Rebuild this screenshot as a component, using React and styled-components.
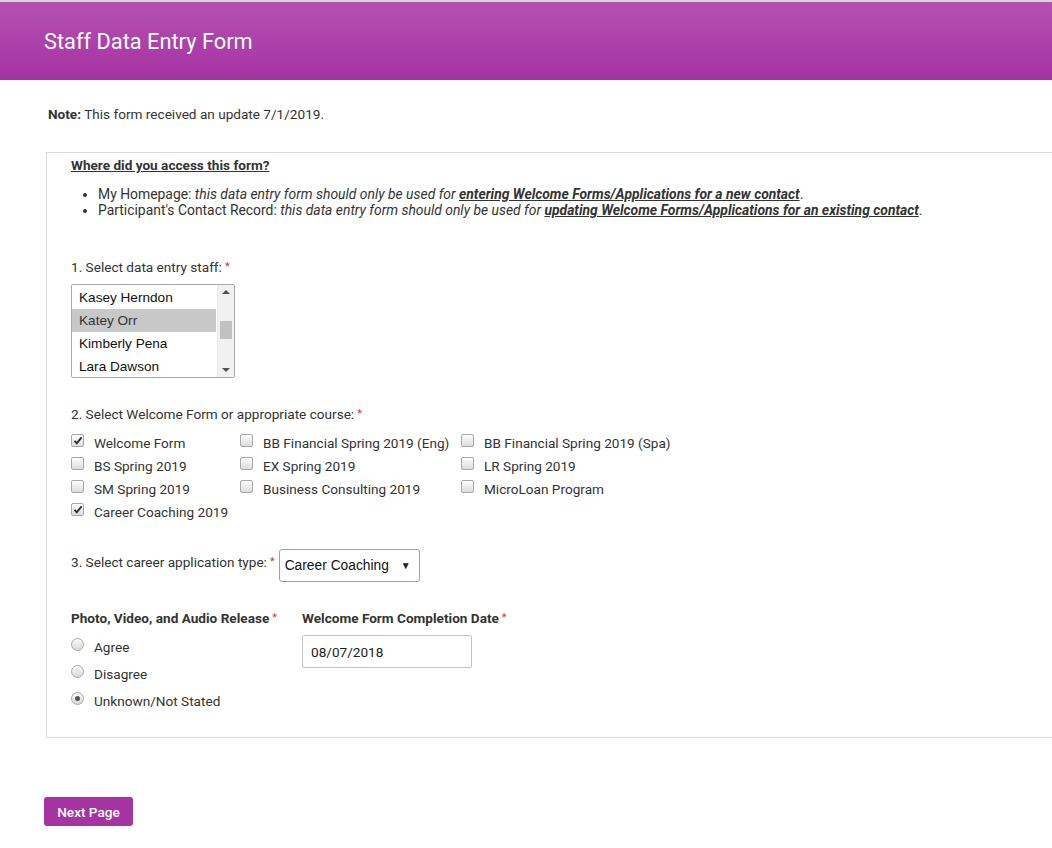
import React from "react";
import styled, { createGlobalStyle } from "styled-components";

const Global = createGlobalStyle`
  html, body { margin: 0; padding: 0; background: #fff; }
  body { font-family: Roboto, "Liberation Sans", Arial, sans-serif; color: #333; font-size: 13.6px; overflow: hidden; }
`;

const Page = styled.div`
  width: 1052px;
  min-height: 848px;
  border-top: 2px solid #d6d6d6;
`;

const Header = styled.header`
  height: 78px;
  background: linear-gradient(to bottom, #b551b2, #a532a2);
  display: flex;
  align-items: center;
  padding-left: 44px;
`;

const Title = styled.h1`
  margin: 0;
  font-size: 21.8px;
  font-weight: 400;
  color: #fff;
`;

const Note = styled.p`
  margin: 26px 0 0 48px;
  line-height: 16px;
  b { font-weight: 700; }
`;

const Panel = styled.section`
  margin: 30px 0 0 46px;
  border: 1px solid #dcdcdc;
  border-right: none;
  padding: 4px 0 23px 24px;
`;

const Heading = styled.div`
  font-weight: 700;
  text-decoration: underline;
  line-height: 17px;
`;

const Bullets = styled.ul`
  margin: 12px 0 0 0;
  padding-left: 27px;
  line-height: 16px;
  font-size: 13.9px;
  em { font-style: italic; }
  strong { font-weight: 700; font-style: italic; text-decoration: underline; }
`;

const Label = styled.div`
  line-height: 16px;
  margin-top: ${(p) => p.$mt || 0}px;
  display: flex;
  align-items: center;
  font-weight: ${(p) => (p.$bold ? 700 : 400)};
`;

const Req = styled.span`
  color: #e0302a;
  margin-left: 3px;
  font-size: 11px;
  font-weight: 400;
`;

const ListBox = styled.div`
  margin-top: 9px;
  width: 162px;
  height: 92px;
  border: 1px solid #a9a9a9;
  border-radius: 2px;
  display: flex;
  overflow: hidden;
`;

const Options = styled.div`
  flex: 1;
  padding-top: 1px;
  font-family: "Liberation Sans", Arial, sans-serif;
  font-size: 13.6px;
  color: #111;
`;

const Option = styled.div`
  height: 23px;
  line-height: 23px;
  padding-left: 7px;
  margin-right: 1px;
  background: ${(p) => (p.$selected ? "#c8c8c8" : "transparent")};
  color: ${(p) => (p.$selected ? "#333" : "#111")};
`;

const Scrollbar = styled.div`
  width: 16px;
  background: #f1f1f1;
  border-left: 1px solid #e8e8e8;
  display: flex;
  flex-direction: column;
  align-items: center;
  justify-content: space-between;
  padding: 5px 0;
  position: relative;
`;

const Thumb = styled.div`
  position: absolute;
  left: 2px;
  top: 36px;
  width: 12px;
  height: 18px;
  background: #c1c1c1;
`;

const Arrow = styled.div`
  width: 0;
  height: 0;
  border-left: 4px solid transparent;
  border-right: 4px solid transparent;
  ${(p) => (p.$down ? "border-top: 4px solid #505050;" : "border-bottom: 4px solid #505050;")}
`;

const CheckGrid = styled.div`
  margin-top: 9px;
  display: grid;
  grid-template-columns: 169px 221px auto;
  grid-auto-rows: 23px;
`;

const CheckItem = styled.label`
  display: flex;
  align-items: center;
  line-height: 16px;
`;

const Box = styled.span`
  width: 11px;
  height: 11px;
  border: 1px solid #a8a8a8;
  border-radius: 2px;
  background: linear-gradient(to bottom, #fdfdfd, #dcdcdc);
  margin-right: 10px;
  margin-top: -4px;
  display: flex;
  align-items: center;
  justify-content: center;
  flex: none;
`;

const Row = styled.div`
  display: flex;
  align-items: center;
  margin-top: 26px;
`;

const InlineLabel = styled(Label)`
  margin-top: -7px;
`;

const Select = styled.div`
  margin-left: 4px;
  height: 31px;
  border: 1px solid #a0a0a0;
  border-radius: 3px;
  display: flex;
  align-items: center;
  justify-content: space-between;
  padding: 0 8px 0 5px;
  box-sizing: content-box;
  width: 126px;
  font-family: "Liberation Sans", Arial, sans-serif;
  font-size: 13.8px;
  color: #111;
`;

const Caret = styled.span`
  font-size: 10px;
  color: #222;
`;

const Columns = styled.div`
  display: flex;
  margin-top: 28px;
`;

const Col = styled.div`
  width: ${(p) => p.$w}px;
`;

const RadioList = styled.div`
  margin-top: 7px;
  display: flex;
  flex-direction: column;
`;

const RadioItem = styled.label`
  height: 27px;
  display: flex;
  align-items: center;
`;

const Radio = styled.span`
  width: 11px;
  height: 11px;
  border-radius: 50%;
  border: 1px solid #a8a8a8;
  background: linear-gradient(to bottom, #fbfbfb, #d8d8d8);
  margin-right: 10px;
  margin-top: -5px;
  display: flex;
  align-items: center;
  justify-content: center;
  flex: none;
  &::after {
    content: "";
    width: 5px;
    height: 5px;
    border-radius: 50%;
    background: ${(p) => (p.$on ? "#555" : "transparent")};
  }
`;

const DateInput = styled.div`
  margin-top: 9px;
  height: 31px;
  border: 1px solid #c4c4c4;
  border-radius: 2px;
  display: flex;
  align-items: center;
  padding-left: 8px;
  box-sizing: content-box;
  width: 160px;
  font-size: 13.6px;
  color: #222;
`;

const Button = styled.button`
  margin: 59px 0 0 44px;
  width: 89px;
  height: 29px;
  border: none;
  border-radius: 3px;
  background: #a533a2;
  color: #fff;
  font-family: Roboto, sans-serif;
  font-size: 13.6px;
  font-weight: 500;
  padding: 0;
`;

const Check = () => (
  <svg width="10" height="9" viewBox="0 0 10 9">
    <path d="M1.5 4.8 L3.8 7.2 L8.6 1.4" fill="none" stroke="#333" strokeWidth="1.9" />
  </svg>
);

const staff = ["Kasey Herndon", "Katey Orr", "Kimberly Pena", "Lara Dawson"];
const courses = [
  ["Welcome Form", true],
  ["BB Financial Spring 2019 (Eng)", false],
  ["BB Financial Spring 2019 (Spa)", false],
  ["BS Spring 2019", false],
  ["EX Spring 2019", false],
  ["LR Spring 2019", false],
  ["SM Spring 2019", false],
  ["Business Consulting 2019", false],
  ["MicroLoan Program", false],
  ["Career Coaching 2019", true],
];

export default function App() {
  return (
    <>
      <Global />
      <Page>
        <Header>
          <Title>Staff Data Entry Form</Title>
        </Header>
        <Note>
          <b>Note:</b> This form received an update 7/1/2019.
        </Note>
        <Panel>
          <Heading>Where did you access this form?</Heading>
          <Bullets>
            <li>
              My Homepage: <em>this data entry form should only be used for </em>
              <strong>entering Welcome Forms/Applications for a new contact</strong>.
            </li>
            <li>
              Participant's Contact Record: <em>this data entry form should only be used for </em>
              <strong>updating Welcome Forms/Applications for an existing contact</strong>.
            </li>
          </Bullets>
          <Label $mt={41}>
            1. Select data entry staff:<Req>*</Req>
          </Label>
          <ListBox>
            <Options>
              {staff.map((s, i) => (
                <Option key={s} $selected={i === 1}>
                  {s}
                </Option>
              ))}
            </Options>
            <Scrollbar>
              <Arrow />
              <Thumb />
              <Arrow $down />
            </Scrollbar>
          </ListBox>
          <Label $mt={28}>
            2. Select Welcome Form or appropriate course:<Req>*</Req>
          </Label>
          <CheckGrid>
            {courses.map(([c, on]) => (
              <CheckItem key={c}>
                <Box>{on && <Check />}</Box>
                {c}
              </CheckItem>
            ))}
          </CheckGrid>
          <Row>
            <InlineLabel>
              3. Select career application type:<Req>*</Req>
            </InlineLabel>
            <Select>
              Career Coaching<Caret>▼</Caret>
            </Select>
          </Row>
          <Columns>
            <Col $w={231}>
              <Label $bold>
                Photo, Video, and Audio Release<Req>*</Req>
              </Label>
              <RadioList>
                <RadioItem>
                  <Radio />
                  Agree
                </RadioItem>
                <RadioItem>
                  <Radio />
                  Disagree
                </RadioItem>
                <RadioItem>
                  <Radio $on />
                  Unknown/Not Stated
                </RadioItem>
              </RadioList>
            </Col>
            <Col $w={300}>
              <Label $bold>
                Welcome Form Completion Date<Req>*</Req>
              </Label>
              <DateInput>08/07/2018</DateInput>
            </Col>
          </Columns>
        </Panel>
        <Button>Next Page</Button>
      </Page>
    </>
  );
}
